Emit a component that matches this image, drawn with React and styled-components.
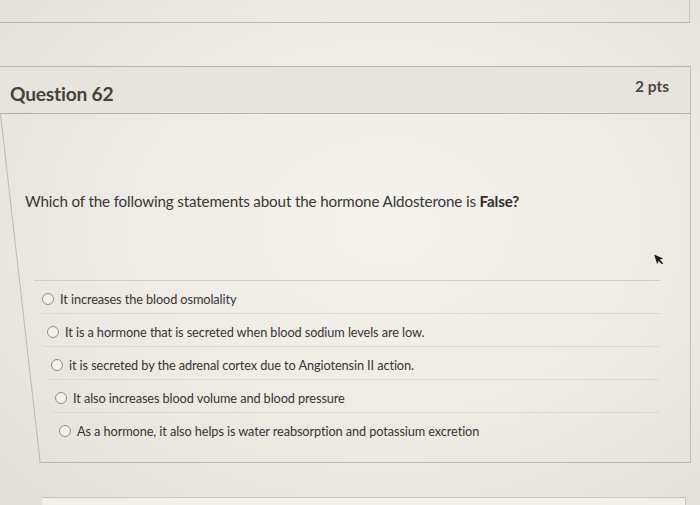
import styled, { createGlobalStyle } from "styled-components";

const GlobalStyle = createGlobalStyle`
  body {
    margin: 0;
    background: #ebe8e1;
    font-family: Lato, "Open Sans", sans-serif;
    overflow: hidden;
  }
`;

const Page = styled.div`
  width: 700px;
  height: 505px;
  display: flex;
  flex-direction: column;
  background: radial-gradient(ellipse at 55% 45%, #f4f2ec 0%, #efece5 45%, #e2dfd8 100%);
  overflow: hidden;
`;

const TopBox = styled.div`
  height: 22px;
  margin-right: 10px;
  border-bottom: 1px solid #bbb8b1;
  border-right: 1px solid #c9c6bf;
  flex-shrink: 0;
`;

const Card = styled.div`
  margin-top: 43px;
  margin-right: 9px;
  border-top: 1px solid #b9b6af;
  border-right: 1px solid #c4c1ba;
  flex-shrink: 0;
`;

const Header = styled.div`
  height: 46px;
  padding: 0 21px 0 10px;
  display: flex;
  justify-content: space-between;
  align-items: center;
  background: #e6e4dc;
  border-bottom: 1px solid #b5b2ab;
`;

const Title = styled.h2`
  margin: 6px 0 0;
  font-size: 19.2px;
  font-weight: 700;
  color: #444340;
  letter-spacing: -0.2px;
`;

const Points = styled.span`
  margin-top: -8px;
  font-size: 15.5px;
  font-weight: 700;
  color: #4a4946;
`;

const Body = styled.div`
  position: relative;
  height: 349px;
  display: flex;
  flex-direction: column;

  &::before {
    content: "";
    position: absolute;
    left: 0;
    top: 0;
    width: 1px;
    height: 100%;
    background: #bdbab3;
    transform-origin: top left;
    transform: skewX(6.5deg);
  }

  &::after {
    content: "";
    position: absolute;
    left: 39px;
    right: 0;
    bottom: 0;
    height: 1px;
    background: #bdbab3;
  }
`;

const Question = styled.p`
  margin: 77px 0 0 25px;
  font-size: 15.2px;
  line-height: 20px;
  color: #383735;
  letter-spacing: -0.15px;

  strong {
    font-weight: 700;
    color: #2f2e2c;
  }
`;

const Answers = styled.ul`
  list-style: none;
  margin: 69px 30px 0 0;
  padding: 0;
`;

const Answer = styled.li`
  height: 33px;
  box-sizing: border-box;
  margin-left: ${(p) => p.$indent - 8}px;
  padding: 3px 0 0 8px;
  display: flex;
  align-items: center;
  gap: 6px;
  border-top: ${(p) => (p.$first ? "1px solid #d2cfc8" : "1px solid #dcd9d2")};
  font-size: 12.75px;
  color: #363533;
  letter-spacing: -0.1px;
`;

const Radio = styled.span`
  width: 10px;
  height: 10px;
  border-radius: 50%;
  border: 1px solid #8f8d88;
  background: #f4f2ee;
  flex-shrink: 0;
`;

const Cursor = styled.svg`
  position: absolute;
  left: 653px;
  top: 138px;
`;

const NextBox = styled.div`
  margin: 34px 14px 0 42px;
  flex: 1;
  border-top: 1px solid #c6c3bc;
  border-right: 1px solid #cbc8c1;
  background: #f1efe9;
`;

const answers = [
  { text: "It increases the blood osmolality", indent: 42 },
  { text: "It is a hormone that is secreted when blood sodium levels are low.", indent: 47 },
  { text: "it is secreted by the adrenal cortex due to Angiotensin II action.", indent: 51 },
  { text: "It also increases blood volume and blood pressure", indent: 55 },
  { text: "As a hormone, it also helps is water reabsorption and potassium excretion", indent: 59 },
];

export default function App() {
  return (
    <>
      <GlobalStyle />
      <Page>
        <TopBox />
        <Card>
          <Header>
            <Title>Question 62</Title>
            <Points>2 pts</Points>
          </Header>
          <Body>
            <Question>
              Which of the following statements about the hormone Aldosterone is{" "}
              <strong>False?</strong>
            </Question>
            <Answers>
              {answers.map((a, i) => (
                <Answer key={i} $indent={a.indent} $first={i === 0}>
                  <Radio />
                  {a.text}
                </Answer>
              ))}
            </Answers>
            <Cursor width="12" height="14" viewBox="0 0 12 14">
              <path d="M3 1 L10 8 L6.5 8 L8.5 12.5 L7 13 L5 8.7 L2.5 11 Z" fill="#1b1b1b" transform="rotate(-20 6 7)" />
            </Cursor>
          </Body>
        </Card>
        <NextBox />
      </Page>
    </>
  );
}
